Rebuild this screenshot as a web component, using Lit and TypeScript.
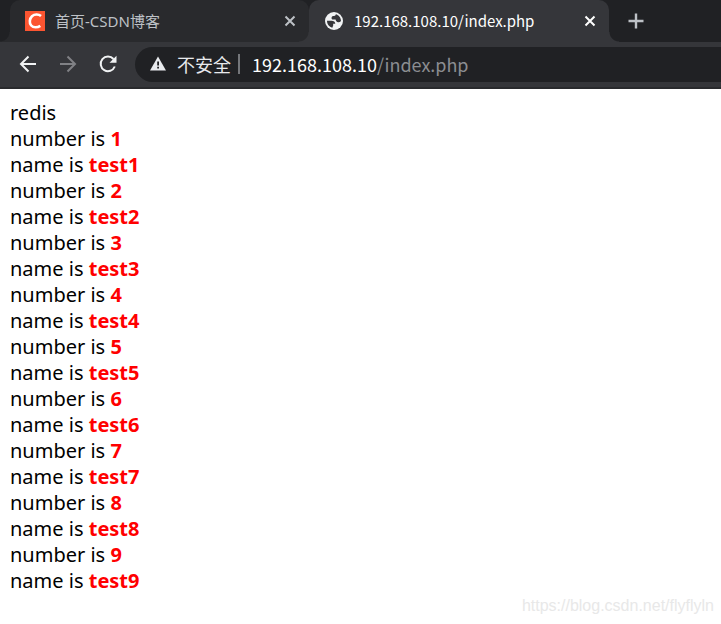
import { LitElement, html, css } from "lit";
import { customElement } from "lit/decorators.js";

@customElement("app-root")
class AppRoot extends LitElement {
  static styles = css`
    :host {
      display: flex;
      flex-direction: column;
      position: relative;
      min-height: 100vh;
      background: #fff;
      font-family: "Noto Sans", "Noto Sans CJK SC", sans-serif;
    }
    * { box-sizing: border-box; }
    button {
      display: grid;
      place-items: center;
      flex: none;
      padding: 0;
      border: 0;
      background: none;
      color: inherit;
    }
    svg { display: block; flex: none; }
    .tabs {
      display: flex;
      height: 42px;
      padding-left: 10px;
      background: #202124;
      overflow: hidden;
    }
    .tab {
      position: relative;
      display: flex;
      align-items: center;
      flex: 0 1 299px;
      min-width: 0;
      padding: 0 9px 0 15px;
      border-radius: 10px 10px 0 0;
      background: #292a2d;
      color: #bdc1c6;
      font: 15px/42px "Noto Sans CJK SC", sans-serif;
    }
    .tab::before, .tab::after {
      content: "";
      position: absolute;
      bottom: 0;
      width: 10px;
      height: 10px;
    }
    .tab::before {
      right: 100%;
      background: radial-gradient(circle at 0 0, transparent 9px, #292a2d 10px);
    }
    .tab::after {
      left: 100%;
      background: radial-gradient(circle at 100% 0, transparent 9px, #292a2d 10px);
    }
    .tab.active {
      flex-basis: 300px;
      background: #35363a;
      color: #fff;
      z-index: 1;
    }
    .tab.active::before { background: radial-gradient(circle at 0 0, transparent 9px, #35363a 10px); }
    .tab.active::after { background: radial-gradient(circle at 100% 0, transparent 9px, #35363a 10px); }
    .title {
      flex: 1;
      margin-left: 10px;
      overflow: hidden;
      white-space: nowrap;
    }
    .cjk { font-family: "Noto Sans", "Noto Sans CJK SC", sans-serif; }
    .close { width: 20px; height: 20px; }
    .add { width: 30px; height: 42px; margin-left: 12px; color: #bdc1c6; }
    .toolbar {
      display: flex;
      align-items: center;
      height: 47px;
      padding: 0 0 2px 8px;
      border-bottom: 2px solid #292a2d;
      background: #35363a;
      color: #f1f3f4;
    }
    .nav { width: 40px; height: 36px; }
    .nav:disabled { color: #808185; }
    .address {
      display: flex;
      align-items: center;
      flex: 1;
      min-width: 0;
      height: 35px;
      margin: 1px 0 0 7px;
      padding: 0 0 1px 15px;
      border-radius: 18px 0 0 18px;
      background: #202124;
      color: #e8eaed;
      font: 18px/34px "Noto Sans CJK SC", sans-serif;
      white-space: nowrap;
    }
    .warning { margin-left: 11px; }
    .divider {
      width: 2px;
      height: 20px;
      margin: 0 12px 0 7px;
      background: #74767a;
    }
    .host { color: #fff; }
    .path { color: #8b8d91; }
    main {
      flex: 1;
      padding: 11px 10px;
      color: #000;
      font-size: 20px;
      line-height: 26px;
    }
    p { margin: 0; }
    b { color: #f00; }
    .watermark {
      position: absolute;
      right: 7px;
      bottom: 8px;
      color: #e8e8e8;
      font: 16px/20px "Liberation Sans", sans-serif;
    }
  `;

  private cross() {
    return html`<svg width="12" height="12" viewBox="0 0 12 12" fill="none" stroke="currentColor" stroke-width="2">
      <path d="M1.500 1.500l9 9M10.500 1.500l-9 9" />
    </svg>`;
  }

  render() {
    const rows = [1, 2, 3, 4, 5, 6, 7, 8, 9];
    return html`
      <nav class="tabs" aria-label="Tabs">
        <div class="tab">
          <svg width="20" height="20" viewBox="0 0 20 20">
            <path fill="#fc5531" d="M0 0h20v20H0z" />
            <path fill="none" stroke="#fff" stroke-width="2.600" d="M16 5C13.600 3 9.500 3 7 5.200C4.500 7.500 4 12 6.200 14.500C8.400 16.900 12.500 16.700 15.300 14.800" />
          </svg>
          <span class="title cjk">首页-CSDN博客</span>
          <button class="close" aria-label="Close tab">${this.cross()}</button>
        </div>
        <div class="tab active">
          <svg width="20" height="20" viewBox="0 0 20 20">
            <circle cx="10" cy="10" r="9" fill="#f1f3f4" />
            <path fill="#35363a" d="M11.800 3.300C14.800 4 17 6.800 17 10c-.7.900-1.700 1.300-2.800 1.200c-1.600-.1-2.400-1-2.600-2.600H9.300c-1.400 0-2-1-1.700-2.200c.3-1 1.100-1.400 2.500-1.400c1 0 1.600-.7 1.700-1.700z" />
            <path fill="#35363a" d="M3 9.800h4.300c2.600 0 3.900 1 4 3H9.200v1.800l-.9 2.100C5.200 16 3 13.300 3 9.800z" />
          </svg>
          <span class="title">192.168.108.10/index.php</span>
          <button class="close" aria-label="Close tab">${this.cross()}</button>
        </div>
        <button class="add" aria-label="New tab">
          <svg width="16" height="16" viewBox="0 0 16 16" stroke="currentColor" stroke-width="2.400">
            <path d="M8 .5v15M.5 8h15" />
          </svg>
        </button>
      </nav>
      <div class="toolbar">
        <button class="nav" aria-label="Back">
          <svg width="18" height="18" viewBox="0 0 18 18" fill="none" stroke="currentColor" stroke-width="2">
            <path d="M17 9H2.500M9.500 1.500L2 9l7.500 7.500" />
          </svg>
        </button>
        <button class="nav" aria-label="Forward" disabled>
          <svg width="18" height="18" viewBox="0 0 18 18" fill="none" stroke="currentColor" stroke-width="2">
            <path d="M1 9h14.500M8.500 1.500L16 9l-7.500 7.500" />
          </svg>
        </button>
        <button class="nav" aria-label="Reload">
          <svg width="18" height="18" viewBox="0 0 18 18">
            <path fill="none" stroke="currentColor" stroke-width="2" d="M14.500 4A7.300 7.300 0 1 0 15.800 11.500" />
            <path fill="currentColor" d="M17.500.8v7h-7z" />
          </svg>
        </button>
        <div class="address">
          <svg width="16" height="15" viewBox="0 0 16 15">
            <path fill="#e8eaed" d="M8 0.500L16 14.500H0z" />
            <path fill="#202124" d="M7.200 5.500h1.800v4H7.200zM7.200 10.800h1.800v1.800H7.200z" />
          </svg>
          <span class="warning">不安全</span>
          <span class="divider"></span>
          <span class="host">192.168.108.10</span><span class="path">/index.php</span>
        </div>
      </div>
      <main>
        <p>redis</p>
        ${rows.map((n) => html`<p>number is <b>${n}</b></p><p>name is <b>test${n}</b></p>`)}
      </main>
      <div class="watermark">https://blog.csdn.net/flyflyln</div>
    `;
  }
}
